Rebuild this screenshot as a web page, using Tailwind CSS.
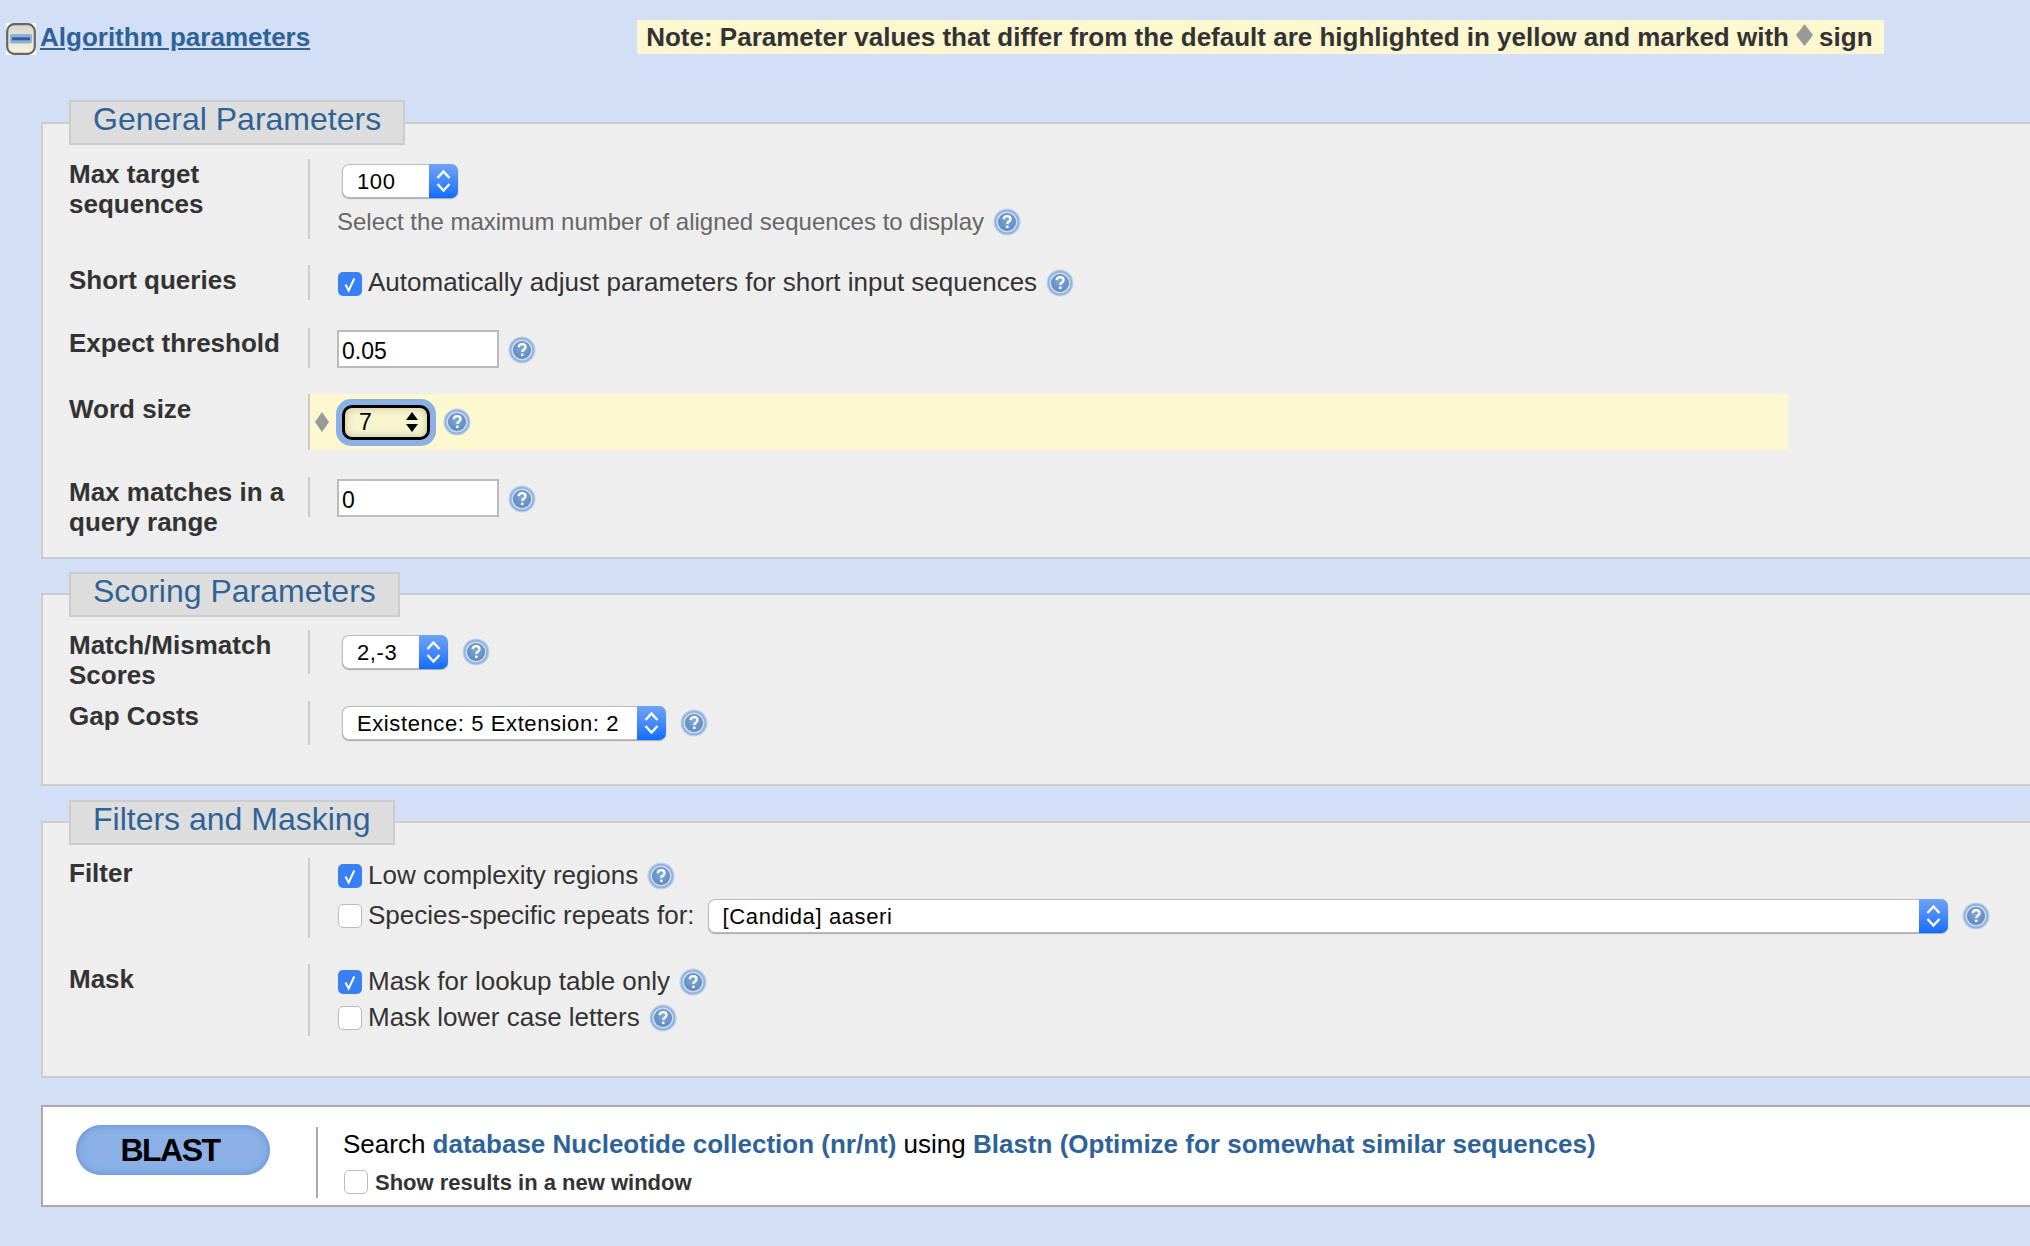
<!DOCTYPE html>
<html lang="en">
<head>
<meta charset="utf-8">
<title>Algorithm parameters</title>
<script src="https://cdn.jsdelivr.net/npm/@tailwindcss/browser@4"></script>
</head>
<body class="bg-[#d2dff5] h-[1246px] w-[2030px] overflow-hidden [font-family:'Liberation_Sans',Arial,sans-serif] text-[#333] text-[26px]">
<svg class="absolute w-0 h-0" aria-hidden="true">
  <defs>
    <radialGradient id="hb" cx="50%" cy="40%" r="55%"><stop offset="0" stop-color="#84a8d4"/><stop offset="1" stop-color="#5f8cc2"/></radialGradient>
    <linearGradient id="mb" x1="0" y1="0" x2="0" y2="1"><stop offset="0" stop-color="#d8d8cc"/><stop offset="1" stop-color="#f6f4dc"/></linearGradient>
    <filter id="soft" x="-10%" y="-10%" width="120%" height="120%"><feGaussianBlur stdDeviation="0.45"/></filter>
    <symbol id="help" viewBox="0 0 28 28">
      <g filter="url(#soft)">
        <circle cx="14" cy="14" r="13.6" fill="#bcd0e8"/>
        <circle cx="14" cy="14" r="12.2" fill="#8fb0d9"/>
        <circle cx="14" cy="14" r="10.6" fill="#c8d9ee"/>
        <circle cx="14" cy="14" r="9" fill="url(#hb)"/>
        <path d="M10.6 11.2c.3-2 1.7-3 3.5-3 2 0 3.4 1.1 3.4 2.8 0 1.4-.8 2.1-1.8 2.8-.9.6-1.3 1-1.3 2.1" fill="none" stroke="#fff" stroke-width="2.3"/>
        <rect x="13" y="17.6" width="2.5" height="2.5" fill="#fff"/>
      </g>
    </symbol>
    <symbol id="chev" viewBox="0 0 29 34">
      <path d="M8.5 14l6-6.5 6 6.5M8.5 20l6 6.5 6-6.5" fill="none" stroke="#fff" stroke-width="2.4"/>
    </symbol>
    <symbol id="tick" viewBox="0 0 24 24">
      <path d="M7.5 12.5l3.2 6 5.6-12" fill="none" stroke="#fff" stroke-width="2"/>
    </symbol>
  </defs>
</svg>

<header class="h-[122px] relative">
  <div class="flex items-start pt-[23px]">
    <svg class="ml-[6px] w-[30px] h-[32px] shrink-0 bg-white" viewBox="0 0 30 32">
      <g filter="url(#soft)">
        <rect x="1.2" y="1.2" width="27.6" height="29.6" rx="7" fill="url(#mb)" stroke="#666" stroke-width="2.2"/>
        <rect x="4" y="11" width="22" height="9.5" rx="2" fill="#8fb0dc"/>
        <rect x="6" y="14.3" width="18" height="3" fill="#2f5f9c"/>
      </g>
    </svg>
    <a href="#" class="ml-[4px] -mt-[2px] font-bold underline text-[#2f6398] text-[26px] leading-[32px]">Algorithm parameters</a>
    <div class="ml-[327px] -mt-[3px] h-[34px] w-[1247px] bg-[#fdf8cf] pl-[9px] font-bold text-[26px] leading-[34px] whitespace-nowrap">Note: Parameter values that differ from the default are highlighted in yellow and marked with<span class="ml-[2px] tracking-[-6px] leading-none font-normal text-[#999] [font-family:'DejaVu_Sans',sans-serif] text-[30px]">♦</span> sign</div>
  </div>
</header>

<main class="ml-[41px]">
  <!-- General -->
  <section class="bg-[#eee] border-2 border-r-0 border-[#ccc] pl-[26px] pb-[20px]">
    <h2 class="-mt-[24px] w-[336px] h-[45px] bg-[#ddd] border-2 border-[#ccc] pl-[22px] text-[#2f6398] text-[32px] font-normal leading-[34px]">General Parameters</h2>
    <div class="flex items-start mt-[14px]">
      <div class="w-[239px] font-bold leading-[30px]">Max target<br>sequences</div>
      <div class="h-[80px] border-l-2 border-[#ccc] pl-[27px] flex flex-col">
        <div class="ml-[5px] mt-[5px] w-[116px] h-[34px] bg-white rounded-[7px] border-y border-l border-[#bbb] flex justify-between items-center pl-[14px] text-black text-[22px] tracking-[0.6px] shadow-[0_1px_1px_#aaa]">100<svg class="w-[29px] h-[34px] shrink-0 rounded-r-[7px] bg-gradient-to-b from-[#6ea3f5] to-[#0a6cff]"><use href="#chev"/></svg></div>
        <div class="flex items-center mt-[6px] text-[#666] text-[24px]">Select the maximum number of aligned sequences to display<svg class="ml-[9px] w-[28px] h-[28px]"><use href="#help"/></svg></div>
      </div>
    </div>
    <div class="flex items-start mt-[26px]">
      <div class="w-[239px] font-bold leading-[30px]">Short queries</div>
      <div class="h-[35px] border-l-2 border-[#ccc] pl-[28px] flex items-center">
        <svg class="w-[24px] h-[24px] mt-[3px] rounded-[5px] bg-[#3a80f5]"><use href="#tick"/></svg><span class="ml-[6px]">Automatically adjust parameters for short input sequences</span><svg class="ml-[9px] w-[28px] h-[28px]"><use href="#help"/></svg>
      </div>
    </div>
    <div class="flex items-start mt-[28px]">
      <div class="w-[239px] font-bold leading-[30px]">Expect threshold</div>
      <div class="h-[40px] border-l-2 border-[#ccc] pl-[27px] flex items-start pt-[2px]">
        <div class="w-[162px] h-[38px] bg-white border-2 border-[#bbb] pl-[3px] text-black text-[23px] leading-[38px]">0.05</div><svg class="ml-[9px] mt-[6px] w-[28px] h-[28px]"><use href="#help"/></svg>
      </div>
    </div>
    <div class="flex items-start mt-[26px]">
      <div class="w-[239px] font-bold leading-[30px]">Word size</div>
      <div class="h-[56px] w-[1480px] bg-[#fdf8cf] border-l-2 border-[#ccc] pl-[5px] flex items-center">
        <svg class="w-[14px] h-[20px]" viewBox="0 0 14 20"><path d="M7 0l7 10-7 10-7-10z" fill="#999"/></svg>
        <div class="ml-[7px] w-[100px] h-[47px] rounded-[15px] bg-[#8ab0e6] p-[6px]">
          <div class="h-full border-[3px] border-black rounded-[10px] bg-[#f7f5cf] shadow-[inset_0_0_9px_#c4c29a] flex items-center justify-between pl-[14px] pr-[8px] text-black text-[23px]">7<svg class="w-[14px] h-[22px]" viewBox="0 0 14 22"><path d="M7 1l6 8H1zM1 13h12l-6 8z" fill="#000"/></svg></div>
        </div>
        <svg class="ml-[7px] w-[28px] h-[28px]"><use href="#help"/></svg>
      </div>
    </div>
    <div class="flex items-start mt-[27px]">
      <div class="w-[239px] font-bold leading-[30px]">Max matches in a<br>query range</div>
      <div class="h-[40px] border-l-2 border-[#ccc] pl-[27px] flex items-start pt-[2px]">
        <div class="w-[162px] h-[38px] bg-white border-2 border-[#bbb] pl-[3px] text-black text-[23px] leading-[38px]">0</div><svg class="ml-[9px] mt-[6px] w-[28px] h-[28px]"><use href="#help"/></svg>
      </div>
    </div>
  </section>

  <!-- Scoring -->
  <section class="mt-[34px] bg-[#eee] border-2 border-r-0 border-[#ccc] pl-[26px] pb-[39px]">
    <h2 class="-mt-[23px] w-[331px] h-[45px] bg-[#ddd] border-2 border-[#ccc] pl-[22px] text-[#2f6398] text-[32px] font-normal leading-[34px]">Scoring Parameters</h2>
    <div class="flex items-start mt-[13px]">
      <div class="w-[239px] font-bold leading-[30px]">Match/Mismatch<br>Scores</div>
      <div class="h-[44px] border-l-2 border-[#ccc] pl-[32px] pt-[5px] flex items-start">
        <div class="w-[106px] h-[34px] bg-white rounded-[7px] border-y border-l border-[#bbb] flex justify-between items-center pl-[14px] text-black text-[22px] tracking-[0.6px] shadow-[0_1px_1px_#aaa]">2,-3<svg class="w-[29px] h-[34px] shrink-0 rounded-r-[7px] bg-gradient-to-b from-[#6ea3f5] to-[#0a6cff]"><use href="#chev"/></svg></div>
        <svg class="ml-[14px] mt-[3px] w-[28px] h-[28px]"><use href="#help"/></svg>
      </div>
    </div>
    <div class="flex items-start mt-[11px]">
      <div class="w-[239px] font-bold leading-[30px]">Gap Costs</div>
      <div class="h-[44px] border-l-2 border-[#ccc] pl-[32px] pt-[5px] flex items-start">
        <div class="w-[324px] h-[34px] bg-white rounded-[7px] border-y border-l border-[#bbb] flex justify-between items-center pl-[14px] text-black text-[22px] tracking-[0.6px] shadow-[0_1px_1px_#aaa]">Existence: 5 Extension: 2<svg class="w-[29px] h-[34px] shrink-0 rounded-r-[7px] bg-gradient-to-b from-[#6ea3f5] to-[#0a6cff]"><use href="#chev"/></svg></div>
        <svg class="ml-[14px] mt-[3px] w-[28px] h-[28px]"><use href="#help"/></svg>
      </div>
    </div>
  </section>

  <!-- Filters -->
  <section class="mt-[35px] bg-[#eee] border-2 border-r-0 border-[#ccc] pl-[26px] pb-[40px]">
    <h2 class="-mt-[23px] w-[326px] h-[45px] bg-[#ddd] border-2 border-[#ccc] pl-[22px] text-[#2f6398] text-[32px] font-normal leading-[34px]">Filters and Masking</h2>
    <div class="flex items-start mt-[13px]">
      <div class="w-[239px] font-bold leading-[30px]">Filter</div>
      <div class="h-[80px] border-l-2 border-[#ccc] pl-[28px] flex flex-col">
        <div class="h-[36px] flex items-center">
          <svg class="w-[24px] h-[24px] rounded-[5px] bg-[#3a80f5]"><use href="#tick"/></svg><span class="ml-[6px] -mt-[2px]">Low complexity regions</span><svg class="ml-[9px] w-[28px] h-[28px]"><use href="#help"/></svg>
        </div>
        <div class="h-[34px] mt-[5px] flex items-center">
          <div class="w-[24px] h-[24px] rounded-[5px] bg-white border border-[#bbb]"></div><span class="ml-[6px] -mt-[2px]">Species-specific repeats for:</span>
          <div class="ml-[13px] w-[1240px] h-[34px] bg-white rounded-[7px] border-y border-l border-[#bbb] flex justify-between items-center pl-[14px] text-black text-[22px] tracking-[0.6px] shadow-[0_1px_1px_#aaa]">[Candida] aaseri<svg class="w-[29px] h-[34px] shrink-0 rounded-r-[7px] bg-gradient-to-b from-[#6ea3f5] to-[#0a6cff]"><use href="#chev"/></svg></div>
          <svg class="ml-[14px] w-[28px] h-[28px]"><use href="#help"/></svg>
        </div>
      </div>
    </div>
    <div class="flex items-start mt-[26px]">
      <div class="w-[239px] font-bold leading-[30px]">Mask</div>
      <div class="h-[72px] border-l-2 border-[#ccc] pl-[28px] flex flex-col">
        <div class="h-[36px] flex items-center">
          <svg class="w-[24px] h-[24px] rounded-[5px] bg-[#3a80f5]"><use href="#tick"/></svg><span class="ml-[6px] -mt-[2px]">Mask for lookup table only</span><svg class="ml-[9px] w-[28px] h-[28px]"><use href="#help"/></svg>
        </div>
        <div class="h-[36px] flex items-center">
          <div class="w-[24px] h-[24px] rounded-[5px] bg-white border border-[#bbb]"></div><span class="ml-[6px] -mt-[2px]">Mask lower case letters</span><svg class="ml-[9px] w-[28px] h-[28px]"><use href="#help"/></svg>
        </div>
      </div>
    </div>
  </section>

  <!-- Submit -->
  <section class="mt-[27px] h-[102px] bg-white border-2 border-r-0 border-[#aaa] flex items-start">
    <div class="ml-[33px] mt-[18px] w-[194px] h-[50px] rounded-[25px] bg-[#8ab0e6] shadow-[inset_0_0_7px_#5f8cd0] flex items-center justify-center pr-[6px] text-black font-bold text-[32px] tracking-[-1.5px]">BLAST</div>
    <div class="ml-[46px] mt-[20px] w-[2px] h-[71px] bg-[#aaa]"></div>
    <div class="ml-[25px] mt-[20px]">
      <div class="h-[34px] leading-[34px] text-black whitespace-nowrap">Search <a href="#" class="font-bold text-[#2f6398]">database Nucleotide collection (nr/nt)</a> using <a href="#" class="font-bold text-[#2f6398]">Blastn (Optimize for somewhat similar sequences)</a></div>
      <div class="h-[42px] flex items-center pl-[1px]">
        <div class="w-[24px] h-[24px] rounded-[5px] bg-white border border-[#bbb]"></div><span class="ml-[7px] font-bold text-[22px]">Show results in a new window</span>
      </div>
    </div>
  </section>
</main>
</body>
</html>
